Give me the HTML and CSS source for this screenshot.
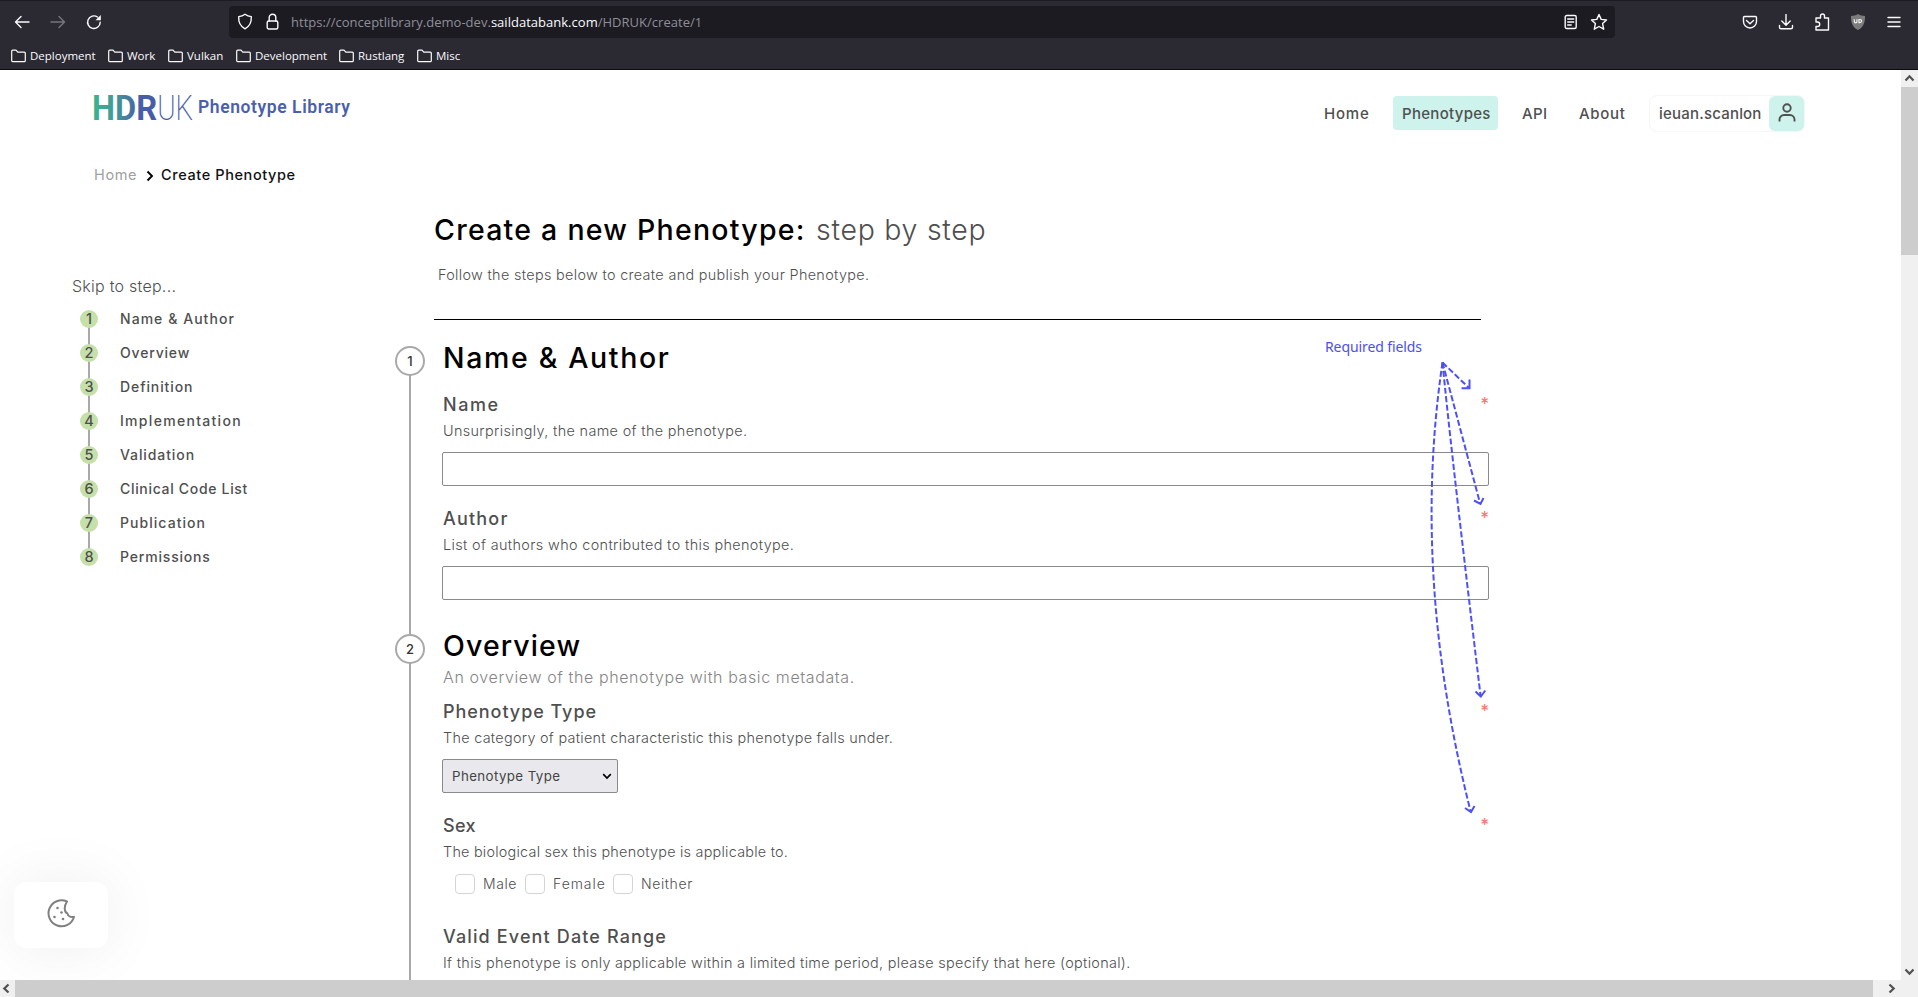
FILE: index.html
```html
<!DOCTYPE html>
<html lang="en">
<head>
<meta charset="utf-8">
<title>Create Phenotype</title>
<link rel="stylesheet" href="styles.css">
</head>
<body>
<div class="window">
  <div class="browser">
    <div class="toolbar">
      <div class="nav-buttons">
        <svg class="ico" width="16" height="16" viewBox="0 0 16 16"><path d="M15 8H1.500M7 2.500 1.500 8 7 13.500"/></svg>
        <svg class="ico dim" width="16" height="16" viewBox="0 0 16 16"><path d="M1 8h13.500M9 2.500 14.500 8 9 13.500"/></svg>
        <svg class="ico" width="16" height="16" viewBox="0 0 16 16"><path d="M14.200 8.200A6.300 6.300 0 1 1 11.500 3"/><path class="solid" d="M14.800 1v5.300H9.500z"/></svg>
      </div>
      <div class="url-bar">
        <svg class="ico" width="16" height="17" viewBox="0 0 16 17"><path d="M8 1.200c2 1.500 4.200 2.200 6.300 2.400.300 5.200-1.600 9.700-6.300 12.200C3.300 13.300 1.400 8.800 1.700 3.600 3.800 3.400 6 2.700 8 1.200z"/></svg>
        <svg class="ico lock" width="13" height="17" viewBox="0 0 13 17"><rect x="1.200" y="8" width="10.600" height="8" rx="1.500"/><path d="M3.200 8V4.500a3.300 3.300 0 0 1 6.600 0V8"/></svg>
        <div class="url">https://conceptlibrary.demo-dev.<span class="domain">saildatabank.com</span>/HDRUK/create/1</div>
        <svg class="ico reader" width="14" height="16" viewBox="0 0 14 16"><rect x="1.200" y="1.500" width="11" height="13" rx="1.500"/><path d="M3.700 5h6M3.700 8h6M3.700 11h3.500"/></svg>
        <svg class="ico" width="18" height="18" viewBox="0 0 18 18"><path d="M9 1.500l2.200 4.900 5.300.600-3.900 3.600 1.100 5.600L9 13.500l-4.700 2.700 1.100-5.600L1.500 7l5.300-.600z"/></svg>
      </div>
      <div class="actions">
        <svg class="ico" width="16" height="16" viewBox="0 0 16 16"><path d="M2.500 2.500h11a1 1 0 0 1 1 1V7.500a6.500 6.500 0 0 1-13 0V3.500a1 1 0 0 1 1-1zM4.500 6.500 8 9.800l3.500-3.300"/></svg>
        <svg class="ico" width="16" height="16" viewBox="0 0 16 16"><path d="M8 .500v10.500M3.800 7 8 11.200 12.200 7M1.500 11.500v1.800a1.500 1.500 0 0 0 1.500 1.500h10a1.500 1.500 0 0 0 1.500-1.500v-1.800"/></svg>
        <svg class="ico" width="16" height="18" viewBox="0 0 16 18"><path d="M2 6.500V5h4.500V3a2 2 0 0 1 4 0v2h4v12H2v-3.500h1.500a2 2 0 0 0 0-4.500H2z"/></svg>
        <svg width="16" height="18" viewBox="0 0 16 18"><path d="M8 1c2.300 1.400 4.600 1.900 7 2 .3 6.500-1.800 11.500-7 14-5.200-2.500-7.300-7.500-7-14 2.400-.1 4.700-.6 7-2z" fill="#7c7c7c"/><path d="M4.300 6.300v2.200c0 1.700 2.700 1.700 2.700 0V6.300M9 6.500v3.100h.9c2.300 0 2.300-3.100 0-3.100z" fill="none" stroke="#f2f2f2" stroke-width="1.200"/></svg>
        <svg class="ico" width="14" height="14" viewBox="0 0 14 14"><path d="M1 2.500h12M1 7h12M1 11.500h12"/></svg>
      </div>
    </div>
    <div class="bookmarks">
      <div class="bookmark bm-deploy"><svg class="ico" width="15" height="14" viewBox="0 0 15 14"><path d="M.7 2.200a1 1 0 0 1 1-1H5l1.800 2h6.500a1 1 0 0 1 1 1v7.500a1 1 0 0 1-1 1H1.700a1 1 0 0 1-1-1z"/></svg>Deployment</div>
      <div class="bookmark bm-work"><svg class="ico" width="15" height="14" viewBox="0 0 15 14"><path d="M.7 2.200a1 1 0 0 1 1-1H5l1.800 2h6.500a1 1 0 0 1 1 1v7.500a1 1 0 0 1-1 1H1.700a1 1 0 0 1-1-1z"/></svg>Work</div>
      <div class="bookmark bm-vulkan"><svg class="ico" width="15" height="14" viewBox="0 0 15 14"><path d="M.7 2.200a1 1 0 0 1 1-1H5l1.800 2h6.500a1 1 0 0 1 1 1v7.500a1 1 0 0 1-1 1H1.700a1 1 0 0 1-1-1z"/></svg>Vulkan</div>
      <div class="bookmark bm-dev"><svg class="ico" width="15" height="14" viewBox="0 0 15 14"><path d="M.7 2.200a1 1 0 0 1 1-1H5l1.800 2h6.500a1 1 0 0 1 1 1v7.500a1 1 0 0 1-1 1H1.700a1 1 0 0 1-1-1z"/></svg>Development</div>
      <div class="bookmark bm-rust"><svg class="ico" width="15" height="14" viewBox="0 0 15 14"><path d="M.7 2.200a1 1 0 0 1 1-1H5l1.800 2h6.500a1 1 0 0 1 1 1v7.500a1 1 0 0 1-1 1H1.700a1 1 0 0 1-1-1z"/></svg>Rustlang</div>
      <div class="bookmark"><svg class="ico" width="15" height="14" viewBox="0 0 15 14"><path d="M.7 2.200a1 1 0 0 1 1-1H5l1.800 2h6.500a1 1 0 0 1 1 1v7.500a1 1 0 0 1-1 1H1.700a1 1 0 0 1-1-1z"/></svg>Misc</div>
    </div>
  </div>

  <div class="viewport">
    <div class="page">
      <header class="site-header">
        <svg class="logo" width="260" height="36" viewBox="0 0 260 36">
          <defs><linearGradient id="brand" gradientUnits="userSpaceOnUse" x1="0" y1="0" x2="62" y2="0"><stop offset="0" stop-color="#3db28c"/><stop offset=".35" stop-color="#43989a"/><stop offset=".75" stop-color="#475da7"/></linearGradient></defs>
          <text class="logo-bold" x="-2" y="27.500" textLength="65" lengthAdjust="spacingAndGlyphs" fill="url(#brand)">HDR</text>
          <text class="logo-thin" x="63.200" y="27.500" textLength="36" lengthAdjust="spacingAndGlyphs">UK</text>
          <text class="logo-name" x="104" y="21.300" textLength="152" lengthAdjust="spacing">Phenotype Library</text>
        </svg>
        <nav class="site-nav">
          <a class="link link-home">Home</a>
          <a class="link link-active">Phenotypes</a>
          <a class="link link-api">API</a>
          <a class="link link-about">About</a>
          <div class="user">
            <span class="user-name">ieuan.scanlon</span>
            <span class="user-icon"><svg width="20" height="22" viewBox="0 0 20 22"><circle cx="10" cy="6" r="3.700"/><path d="M2.500 19.500v-2a4.500 4.500 0 0 1 4.500-4.500h6a4.500 4.500 0 0 1 4.500 4.500v2"/></svg></span>
          </div>
        </nav>
      </header>

      <div class="breadcrumbs">
        <span class="crumb">Home</span>
        <svg class="crumb-sep" width="8" height="12" viewBox="0 0 8 12"><path d="M1.500 1.500 6 6l-4.500 4.500" fill="none" stroke="#000" stroke-width="1.900"/></svg>
        <span class="crumb-current">Create Phenotype</span>
      </div>

      <div class="columns">
        <aside class="sidebar">
          <div class="skip">Skip to step...</div>
          <ol class="steps">
            <li class="step sp-wide"><span class="num">1</span>Name &amp; Author</li>
            <li class="step sp-mid"><span class="num">2</span>Overview</li>
            <li class="step"><span class="num">3</span>Definition</li>
            <li class="step sp-widest"><span class="num">4</span>Implementation</li>
            <li class="step"><span class="num">5</span>Validation</li>
            <li class="step sp-tight"><span class="num">6</span>Clinical Code List</li>
            <li class="step sp-wide"><span class="num">7</span>Publication</li>
            <li class="step sp-mid"><span class="num">8</span>Permissions</li>
          </ol>
        </aside>

        <main class="content">
          <div class="intro">
            <h1 class="title"><span class="title-main">Create a new Phenotype:</span><span class="title-sub">step by step</span></h1>
            <p class="lead">Follow the steps below to create and publish your Phenotype.</p>
            <div class="rule"></div>
          </div>

          <section class="section">
            <div class="rail"><span class="marker">1</span></div>
            <div class="body">
              <h2 class="heading heading-wide">Name &amp; Author</h2>
              <div class="fields">
                <div class="field">
                  <div class="label"><span class="lb-name">Name</span><span class="req">*</span></div>
                  <p class="desc">Unsurprisingly, the name of the phenotype.</p>
                  <div class="input"></div>
                </div>
                <div class="field">
                  <div class="label"><span class="lb-author">Author</span><span class="req">*</span></div>
                  <p class="desc desc-wide">List of authors who contributed to this phenotype.</p>
                  <div class="input"></div>
                </div>
              </div>
            </div>
          </section>

          <section class="section">
            <div class="rail"><span class="marker">2</span></div>
            <div class="body">
              <h2 class="heading">Overview</h2>
              <p class="summary">An overview of the phenotype with basic metadata.</p>
              <div class="fields fields-after-summary">
                <div class="field">
                  <div class="label"><span class="lb-type">Phenotype Type</span><span class="req">*</span></div>
                  <p class="desc desc-type">The category of patient characteristic this phenotype falls under.</p>
                  <div class="select">Phenotype Type<svg width="10" height="7" viewBox="0 0 10 7"><path d="M1.200 1.200 5 5l3.800-3.800" fill="none" stroke="#000" stroke-width="1.700"/></svg></div>
                </div>
                <div class="field">
                  <div class="label"><span class="lb-sex">Sex</span><span class="req">*</span></div>
                  <p class="desc desc-tight">The biological sex this phenotype is applicable to.</p>
                  <div class="checks">
                    <span class="box"></span><span class="opt opt-male">Male</span>
                    <span class="box"></span><span class="opt opt-female">Female</span>
                    <span class="box"></span><span class="opt">Neither</span>
                  </div>
                </div>
                <div class="field field-date">
                  <div class="label"><span class="lb-date">Valid Event Date Range</span></div>
                  <p class="desc desc-date">If this phenotype is only applicable within a limited time period, please specify that here (optional).</p>
                </div>
              </div>
            </div>
          </section>
        </main>
      </div>
    </div>

    <div class="vbar">
      <svg class="arrow" width="17" height="17" viewBox="0 0 17 17"><path d="M4.500 10.500l4-4.200 4 4.200"/></svg>
      <div class="vthumb"></div>
      <svg class="arrow arrow-end" width="17" height="17" viewBox="0 0 17 17"><path d="M4.500 6.500l4 4.200 4-4.200"/></svg>
    </div>
    <div class="hbar">
      <svg class="arrow" width="15" height="17" viewBox="0 0 15 17"><path d="M8.500 4.500l-4.200 4 4.200 4"/></svg>
      <div class="hthumb"></div>
      <svg class="arrow arrow-right" width="17" height="17" viewBox="0 0 17 17"><path d="M5.500 4.500l4.200 4-4.200 4"/></svg>
    </div>
    <div class="corner"></div>
  </div>

  <div class="cookie">
    <svg width="30" height="30" viewBox="0 0 30 30"><path d="M21 2.500A13 13 0 1 0 28 18c-3.500.4-6-1-6.600-3.600-2.600-1-4.200-6-.4-11.900z" fill="none" stroke="#808080" stroke-width="2" stroke-linejoin="round"/><g fill="#808080"><circle cx="11.500" cy="9" r="1.300"/><circle cx="15.500" cy="13.500" r="1.300"/><circle cx="8.500" cy="18" r="1.300"/><circle cx="17" cy="20" r="1.300"/></g></svg>
  </div>

  <div class="note">Required fields</div>
  <svg class="note-arrows" width="80" height="480" viewBox="1415 350 80 480">
    <g class="dash">
      <path d="M1442.500 362.500 1469 388"/>
      <path d="M1442.500 362.500 1480 503"/>
      <path d="M1442.500 362.500Q1452 460 1480.500 695"/>
      <path d="M1442.500 362.500Q1411 575 1470.500 811"/>
    </g>
    <g class="head">
      <path d="M1469.500 379.500V388.200H1461.500"/>
      <path d="M1474 500.500 1480.500 504 1483.500 498"/>
      <path d="M1475.500 691.500 1480.800 696.500 1485.300 690.500"/>
      <path d="M1465 808 1471 812 1474.500 806"/>
    </g>
  </svg>
</div>
</body>
</html>
```
FILE: styles.css
```css
* { box-sizing: border-box; }

body {
  margin: 0;
  overflow: hidden;
  font-family: Inter, "Open Sans", sans-serif;
  color: #4f4f4f;
  background: #fff;
}

h1, h2, p, ol { margin: 0; padding: 0; font-weight: 400; }
svg { display: block; flex: none; }

.window {
  position: relative;
  display: flex;
  flex-direction: column;
  width: 1918px;
  height: 997px;
  overflow: hidden;
}

/* Browser chrome */
.browser {
  height: 70px;
  background: #2b2a33;
  border-top: 1px solid #1c1b22;
  border-bottom: 1px solid #0c0c0d;
  font-family: "Open Sans", sans-serif;
}
.toolbar { display: flex; align-items: center; height: 40px; padding-top: 1px; }
.nav-buttons { display: flex; gap: 20px; width: 229px; padding-left: 14px; }
.ico { fill: none; stroke: #fbfbfe; stroke-width: 1.4; stroke-linejoin: round; stroke-linecap: round; }
.ico .solid { fill: #fbfbfe; stroke: none; }
.dim { stroke: #77767e; }
.url-bar {
  display: flex;
  align-items: center;
  width: 1386px;
  height: 32px;
  padding: 0 7px 0 8px;
  border-radius: 4px;
  background: #1c1b22;
}
.lock { margin-left: 13px; }
.url { flex: 1; margin-left: 12px; font-size: 13px; letter-spacing: .02px; color: #8f8f98; }
.domain { color: #fbfbfe; }
.reader { margin-right: 12px; }
.actions { display: flex; align-items: center; gap: 20px; padding-left: 127px; }
.actions svg:last-child { margin-left: 1px; }
.bookmarks { display: flex; align-items: center; height: 28px; padding: 2px 0 0 11px; gap: 13px; }
.bookmark { display: flex; align-items: center; gap: 4px; font-size: 11.5px; line-height: 16px; color: #fbfbfe; }
.bookmark .ico { stroke-width: 1.200; }
.bm-deploy { width: 84px; }
.bm-work { width: 47px; }
.bm-vulkan { width: 55px; }
.bm-dev { width: 90px; }
.bm-rust { width: 65px; }

/* Viewport with scrollbars */
.viewport {
  display: grid;
  grid-template-columns: 1901px 17px;
  grid-template-rows: 910px 17px;
}
.page { overflow: hidden; }
.arrow { fill: none; stroke: #505050; stroke-width: 2.200; }
.vbar { display: flex; flex-direction: column; background: #f0f0f0; }
.vthumb { height: 168px; background: #cdcdcd; }
.arrow-end { margin-top: auto; }
.hbar { display: flex; background: #f0f0f0; }
.hthumb { width: 1859px; background: #cdcdcd; }
.arrow-right { margin-left: 11px; }
.corner { background: #f0f0f0; }

/* Header */
.site-header {
  display: flex;
  justify-content: space-between;
  height: 80px;
  padding: 22px 96px 0 94px;
}
.logo { overflow: visible; }
.logo-bold { font: 700 34.500px Roboto, sans-serif; }
.logo-thin { font: 200 34.500px Roboto, sans-serif; fill: #475da7; }
.logo-name { font: 600 17.500px Roboto, sans-serif; fill: #4a5fae; }
.site-nav { display: flex; align-items: center; height: 42px; font-size: 15px; font-weight: 500; color: #505050; }
.link { height: 34px; line-height: 35px; white-space: nowrap; }
.link-home { width: 69px; letter-spacing: .8px; }
.link-active { width: 105px; padding-left: 9px; border-radius: 4px; background: #cdf3ec; letter-spacing: .3px; }
.link-api { width: 81px; padding-left: 24px; letter-spacing: .4px; }
.link-about { width: 70px; letter-spacing: .7px; }
.user {
  display: flex;
  justify-content: space-between;
  width: 156px;
  height: 37px;
  border: 1px solid #f6f6f6;
  border-radius: 8px;
}
.user-name { padding-left: 9px; line-height: 36px; letter-spacing: .2px; }
.user-icon { display: grid; place-items: center; width: 35px; height: 35px; border-radius: 6px; background: #cdf3ec; }
.user-icon svg { fill: none; stroke: #505050; stroke-width: 1.900; }

.breadcrumbs {
  display: flex;
  align-items: center;
  height: 50px;
  padding-left: 94px;
  padding-bottom: 1px;
  font-size: 14.500px;
  letter-spacing: .6px;
}
.crumb { width: 52px; color: #a0a0a0; font-weight: 400; }
.crumb-sep { margin-top: 3px; }
.crumb-current { margin-left: 7px; color: #111; font-weight: 500; }

.columns { display: grid; grid-template-columns: 395px 1094px; }

/* Step list */
.sidebar { padding: 72px 0 0 72px; }
.skip { line-height: 28px; font-size: 16px; font-weight: 300; letter-spacing: .250px; }
.steps { list-style: none; padding: 2px 0 0 8px; }
.step {
  display: flex;
  align-items: center;
  height: 34px;
  padding-bottom: 1px;
  font-size: 14px;
  font-weight: 500;
  letter-spacing: .9px;
  background: linear-gradient(#a9a9a9, #a9a9a9) 8px 0 / 2px 100% no-repeat;
}
.step:first-child { background-position-y: 17px; }
.step:last-child { background-size: 2px 17px; }
.num {
  width: 18px;
  height: 18px;
  margin-right: 22px;
  border-radius: 50%;
  background: #c5e0a9;
  font-size: 14.500px;
  line-height: 18px;
  letter-spacing: 0;
  text-align: center;
}
.sp-wide { letter-spacing: 1.050px; }
.sp-mid { letter-spacing: .820px; }
.sp-widest { letter-spacing: 1.300px; }
.sp-tight { letter-spacing: .680px; }

/* Form */
.intro { padding: 10px 8px 0 39px; }
.title { display: flex; line-height: 40px; font-size: 28.500px; }
.title-main { width: 382px; white-space: nowrap; font-weight: 450; color: #000; letter-spacing: 1.250px; }
.title-sub { font-weight: 300; letter-spacing: .720px; }
.lead { margin-top: 15px; padding-left: 4px; line-height: 20px; font-size: 14.400px; font-weight: 300; letter-spacing: .330px; }
.rule { height: 1px; margin-top: 34px; margin-bottom: 21px; background: #000; }
.section { display: grid; grid-template-columns: 30px 1047px; column-gap: 17px; height: 288px; }
.section + .section { height: 351px; }
.rail { padding-top: 5px; background: linear-gradient(#a9a9a9, #a9a9a9) 14px 0 / 2px 100% no-repeat; }
.section:not(.section + .section) .rail { background-position-y: 10px; }
.marker {
  display: block;
  width: 30px;
  height: 30px;
  border: 2px solid #a9a9a9;
  border-radius: 50%;
  background: #fff;
  font-size: 13px;
  font-weight: 500;
  line-height: 27px;
  text-align: center;
  color: #333;
}
.heading { padding-left: 1px; line-height: 34px; font-size: 28.500px; font-weight: 450; color: #000; letter-spacing: 1.100px; }
.heading-wide { letter-spacing: 1.650px; }
.summary { margin-top: 3px; padding-left: 1px; line-height: 22px; font-size: 16px; font-weight: 300; letter-spacing: .610px; color: #858585; }
.fields { display: flex; flex-direction: column; gap: 21px; padding-top: 18px; }
.fields-after-summary { padding-top: 12px; }
.field-date { margin-top: 10px; }
.label { display: flex; justify-content: space-between; height: 24px; padding-left: 1px; line-height: 24px; font-size: 18px; font-weight: 500; }
.lb-name { letter-spacing: 1.600px; }
.lb-author { letter-spacing: 1.200px; }
.lb-type { letter-spacing: .950px; }
.lb-sex { letter-spacing: .400px; }
.lb-date { letter-spacing: 1.130px; }
.req { font-size: 17px; line-height: 22px; color: #ff7878; }
.desc { margin-top: 4px; padding-left: 1px; line-height: 20px; font-size: 14.400px; font-weight: 300; letter-spacing: .350px; white-space: nowrap; }
.desc-wide { letter-spacing: .370px; }
.desc-type { letter-spacing: .290px; }
.desc-tight { letter-spacing: .240px; }
.desc-date { letter-spacing: .320px; }
.input { height: 34px; margin-top: 11px; border: 1px solid #8a8a8e; border-radius: 2px; background: #fff; }
.select {
  display: flex;
  align-items: center;
  justify-content: space-between;
  width: 176px;
  height: 34px;
  margin-top: 11px;
  padding: 0 5px 0 9px;
  border: 1px solid #8a8a8e;
  border-radius: 2px;
  background: #e9e9ed;
  font-size: 13.300px;
  letter-spacing: .400px;
  color: #444;
}
.checks { display: flex; height: 20px; margin-top: 12px; padding-left: 13px; line-height: 20px; font-size: 14px; font-weight: 300; letter-spacing: .600px; }
.box { width: 20px; height: 20px; margin-right: 8px; border: 1px solid #d4d4d4; border-radius: 4px; }
.opt-male { width: 42px; }
.opt-female { width: 60px; letter-spacing: .950px; }

/* Floating cookie button */
.cookie {
  position: absolute;
  left: 14px;
  top: 882px;
  display: grid;
  place-items: center;
  width: 94px;
  height: 66px;
  padding-bottom: 3px;
  border-radius: 12px;
  background: #fff;
  box-shadow: 0 0 60px rgba(0, 0, 0, .07);
  clip-path: inset(-80px -80px -32px -14px);
}

/* Annotation over the form */
.note { position: absolute; left: 1325px; top: 337px; font: 14px/20px "Noto Sans", sans-serif; letter-spacing: -.1px; color: #4c4cff; }
.note-arrows { position: absolute; left: 1415px; top: 350px; fill: none; stroke: #4c50fa; stroke-width: 2; }
.dash { stroke-dasharray: 6 2.500; }
```
